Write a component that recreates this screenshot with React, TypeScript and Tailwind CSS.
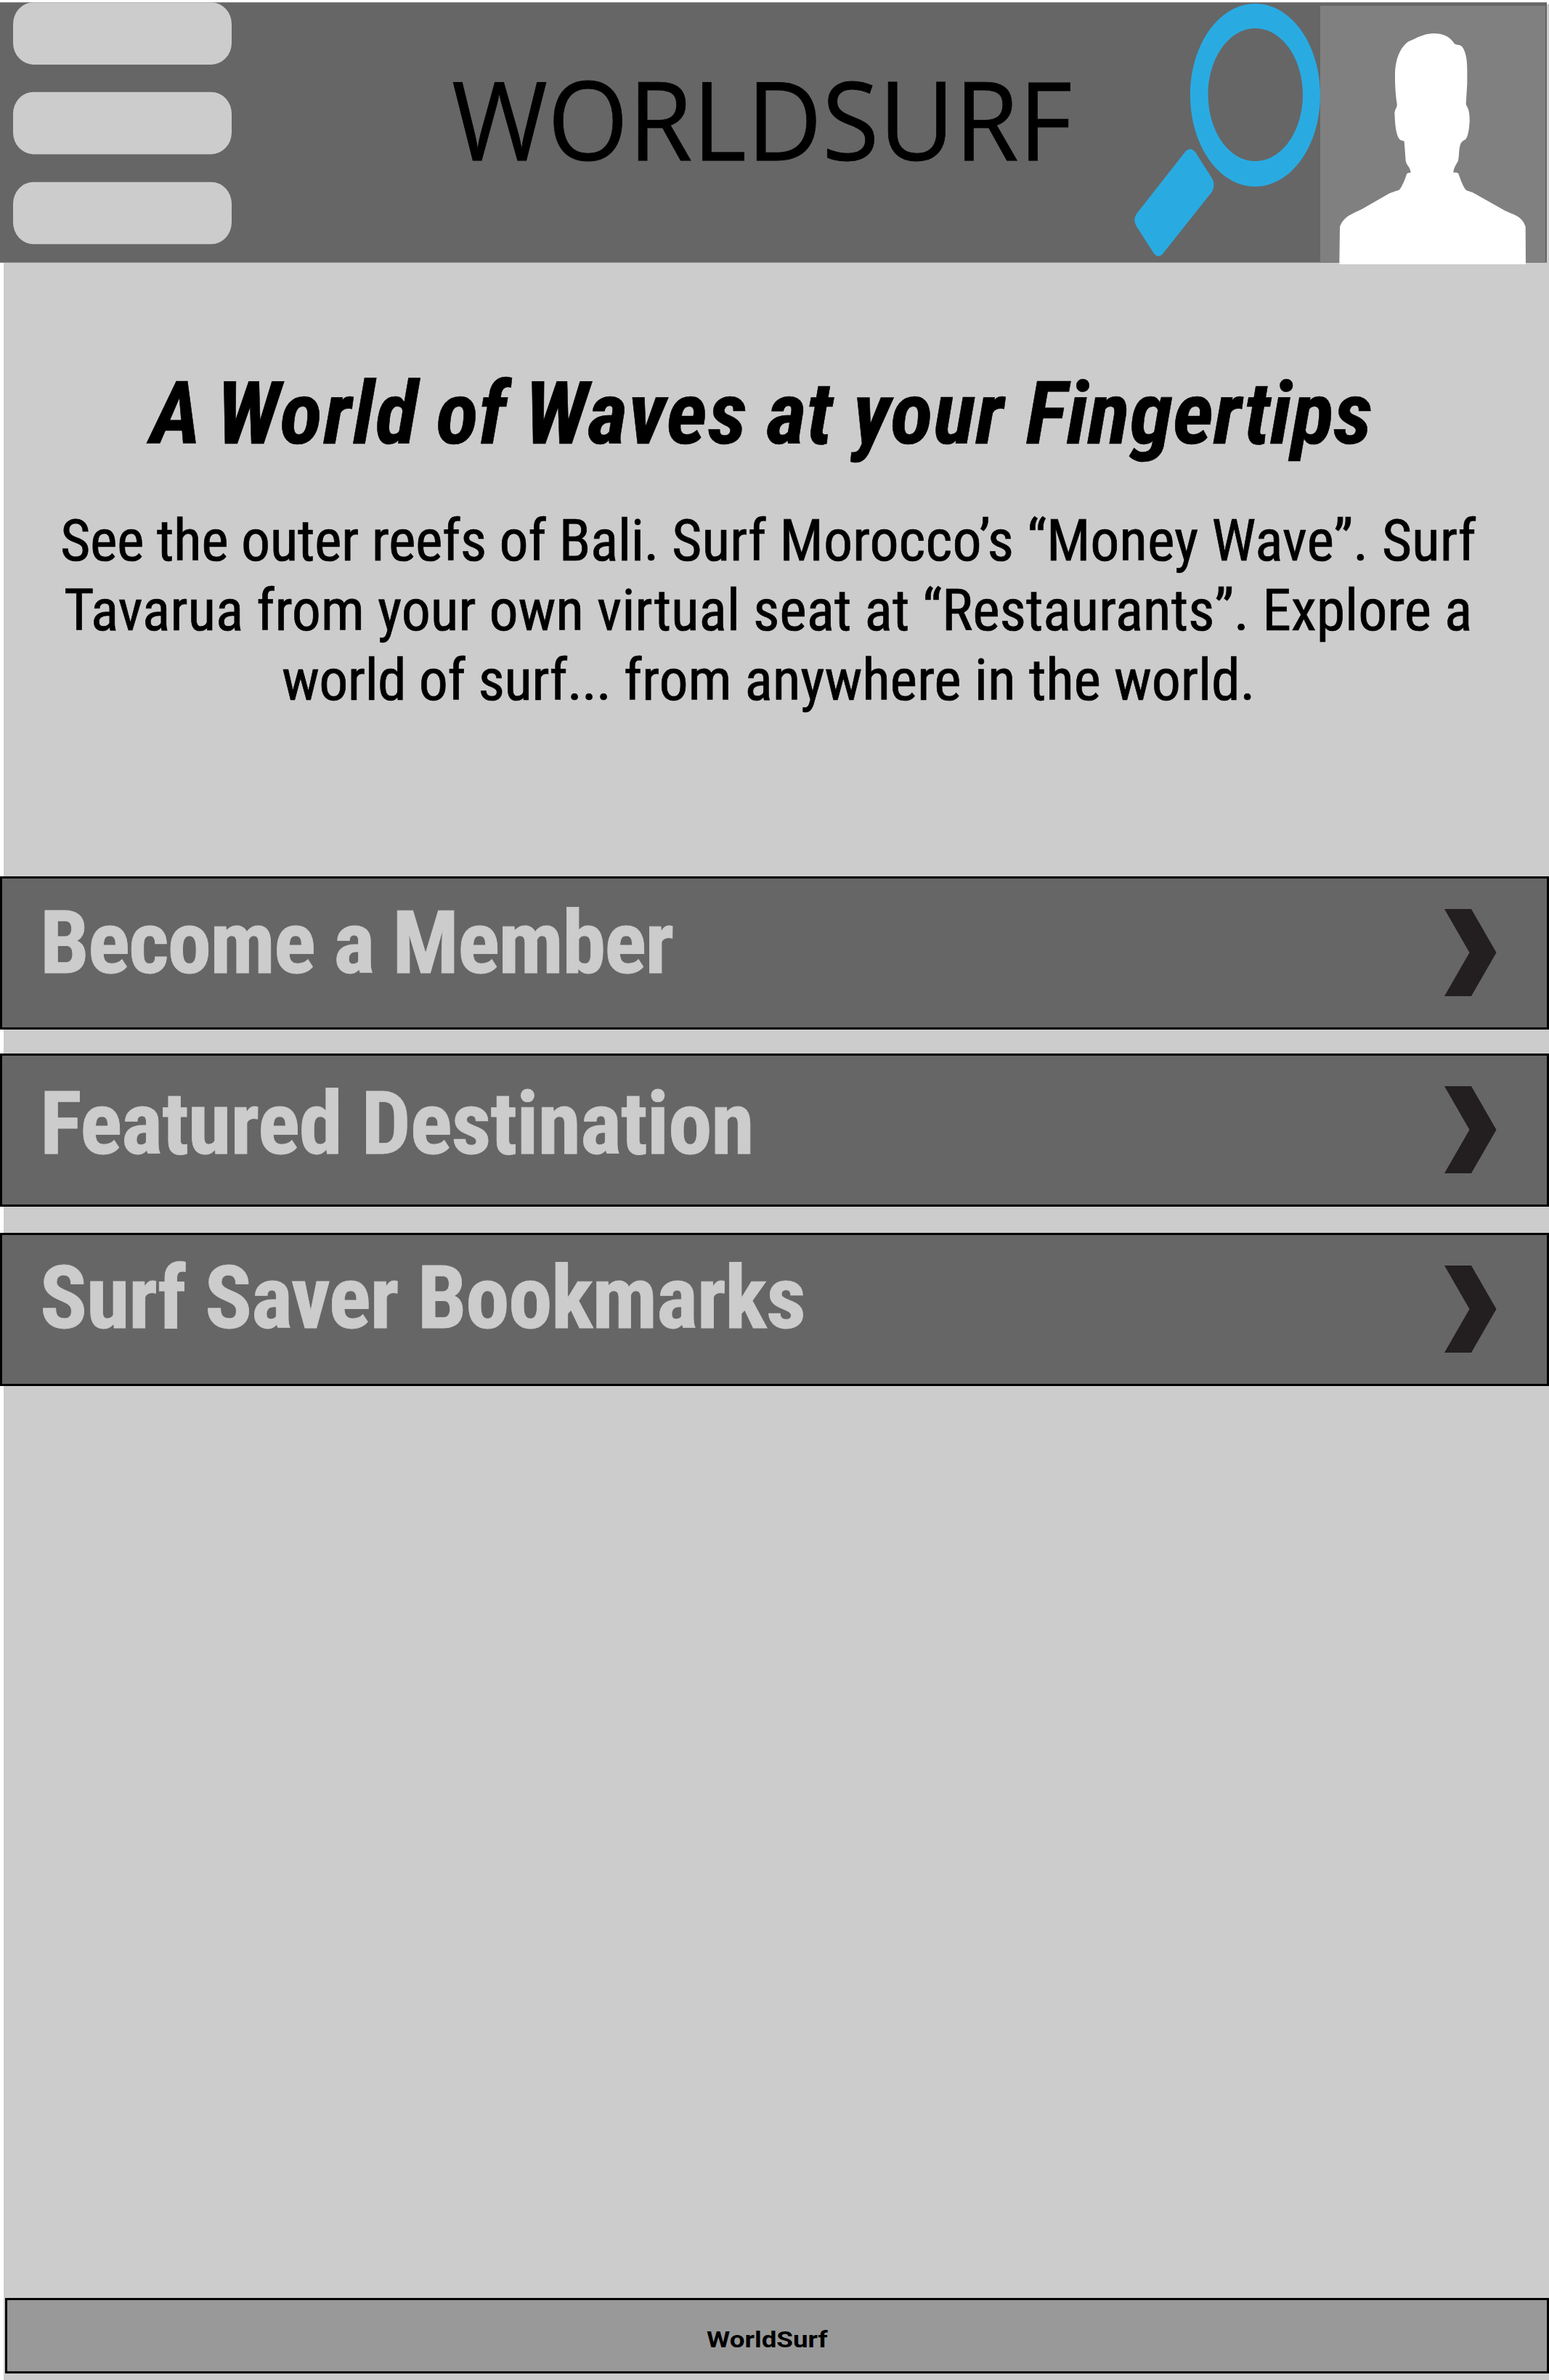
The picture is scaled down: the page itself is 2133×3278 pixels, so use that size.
import React from "react";

const links = [
  { label: "Become a Member", tracking: "tracking-[-1.86px]", box: "mt-[222px]", pad: "pt-[29px]" },
  { label: "Featured Destination", tracking: "tracking-[-1.13px]", box: "mt-[33px]", pad: "pt-[34px]" },
  { label: "Surf Saver Bookmarks", tracking: "tracking-[-1.33px]", box: "mt-[36px]", pad: "pt-[27px]" },
];

function MenuIcon() {
  return (
    <svg viewBox="0 0 301 334" className="block h-[334px] w-[301px]" fill="#cccccc">
      <rect x="0" y="0.3" width="301" height="85.6" rx="28" ry="30" />
      <rect x="0" y="123.8" width="301" height="85.6" rx="28" ry="30" />
      <rect x="0" y="247.7" width="301" height="85.6" rx="28" ry="30" />
    </svg>
  );
}

function SearchIcon() {
  return (
    <svg viewBox="66 12 768 1050" className="block h-[350px] w-[256px]" fill="#29abe2">
      <path
        fillRule="evenodd"
        d="M565.5 15C714 15 834 184 834 393S714 771 565.5 771S297 602 297 393S417 15 565.5 15ZM566 117C458 117 371 240 371 391.500S458 666 566 666S762 543 762 391.500S674 117 566 117Z"
      />
      <path d="M278 625Q297 605 317 627L388 738Q402 765 387 792L184 1048Q166 1070 147 1048L74 934Q58 908 78 880Z" />
    </svg>
  );
}

function Avatar() {
  return (
    <div className="h-[354px] w-[310px] bg-[#808080]">
      <svg viewBox="54 24 930 1068" className="block h-[356px] w-[310px]" fill="#ffffff">
        <path d="M133 1092L135 937C142 915 160 895 185 884C200 876 212 872 225 865L340 799Q350 794 378 786C390 777 404 742 412 717Q420 713 428 713Q427 703 420 690Q408 676 407 664L401 584Q396 581 386 579C373 573 366 540 363 505L361 466Q362 456 367 448Q372 438 371 429C364 385 362 335 363 300C365 250 380 205 410 178Q418 171 432 166C465 150 490 138 524 138C560 138 585 150 603 173Q608 182 614 184L630 187Q640 190 645 200C658 225 661 255 661 290V345L656 430Q658 438 664 447C672 465 672 500 670 515C667 550 661 570 653 577C645 581 638 586 634 594C626 612 629 640 624 662C620 675 605 690 604 713Q618 712 625 717C634 744 645 775 658 787Q680 793 698 803L815 869C830 877 845 881 862 890C885 902 896 918 902 937L903 1092Z" />
      </svg>
    </div>
  );
}

function Chevron() {
  return (
    <svg viewBox="0 0 72 120" className="block h-[120px] w-[72px]" fill="#231f20">
      <path d="M0 0H37L71.500 60L37 120H0L34.500 60Z" />
    </svg>
  );
}

export default function App() {
  return (
    <div className="flex h-[3278px] w-[2133px] flex-col overflow-hidden bg-white pt-[3px] font-['Roboto_Condensed',Roboto,sans-serif] text-black">
      <div className="flex h-[359px] shrink-0">
        <header className="flex h-[359px] w-[2130px] shrink-0 border-y border-[#8a8a8a] bg-[#666666]">
          <button className="-mt-px ml-[18px] h-[334px] w-[301px] shrink-0" aria-label="Menu">
            <MenuIcon />
          </button>
          <h1 className="mt-[83px] ml-[303px] h-[151px] w-[855px] shrink-0 origin-left scale-x-[0.947] font-['Open_Sans',sans-serif] text-[151px] leading-none font-normal whitespace-nowrap [-webkit-text-stroke:0.8px_#000]">
            WORLDSURF
          </h1>
          <button className="ml-[85px] h-[350px] w-[256px] shrink-0" aria-label="Search">
            <SearchIcon />
          </button>
          <div className="relative mt-1 shrink-0">
            <Avatar />
          </div>
        </header>
        <div className="mt-[3px] grow bg-[#cccccc]" />
      </div>

      <main className="ml-[5px] flex grow flex-col bg-[#cccccc]">
        <h2 className="mt-[148px] ml-[202px] text-[121px] leading-none font-bold whitespace-nowrap italic [-webkit-text-stroke:0.6px_#000]">
          A <span className="-ml-[7px] tracking-[1.6px]">World</span> <span className="-ml-[4px]">of</span>{" "}
          <span className="-ml-[3px] tracking-[1.2px]">Waves</span> <span className="-ml-[2px]">at</span>{" "}
          <span className="tracking-[0.6px]">your</span> <span className="ml-[2px]">Fingertips</span>
        </h2>

        <p className="mt-[66px] text-[80px] leading-[96px] whitespace-nowrap [-webkit-text-stroke:0.7px_#000]">
          <span className="ml-[78px] block">
            <span className="tracking-[-0.5px]">See the outer reefs of Bali. </span>
            <span className="tracking-[-0.06px]">Surf Morocco’s “Money Wave”. Surf</span>
          </span>
          <span className="ml-[83px] block tracking-[-0.17px]">
            Tavarua from your own virtual seat at “Restaurants”. Explore a
          </span>
          <span className="ml-[383px] block">
            <span className="tracking-[-0.7px]">world of surf</span>
            <span className="tracking-[-1.2px]">...</span>
            <span className="tracking-[-0.2px]"> from anywhere in the world.</span>
          </span>
        </p>

        <nav className="-ml-[5px] flex flex-col">
          {links.map((l) => (
            <a
              key={l.label}
              className={`flex h-[211px] justify-between border-[3px] border-black bg-[#666666] pr-[69px] pl-[52px] ${l.box}`}
            >
              <span
                className={`text-[121px] leading-none font-bold whitespace-nowrap text-[#cccccc] [-webkit-text-stroke:0.8px_#ccc] ${l.pad} ${l.tracking}`}
              >
                {l.label}
              </span>
              <span className="pt-[42px]">
                <Chevron />
              </span>
            </a>
          ))}
        </nav>

        <footer className="mt-auto mb-[9px] ml-[2px] flex h-[104px] justify-start border-[3px] border-black bg-[#999999] pt-[38px] pl-[963px]">
          <span className="origin-left scale-x-[1.15] font-[Roboto,sans-serif] text-[32px] leading-none font-bold">WorldSurf</span>
        </footer>
      </main>
    </div>
  );
}
